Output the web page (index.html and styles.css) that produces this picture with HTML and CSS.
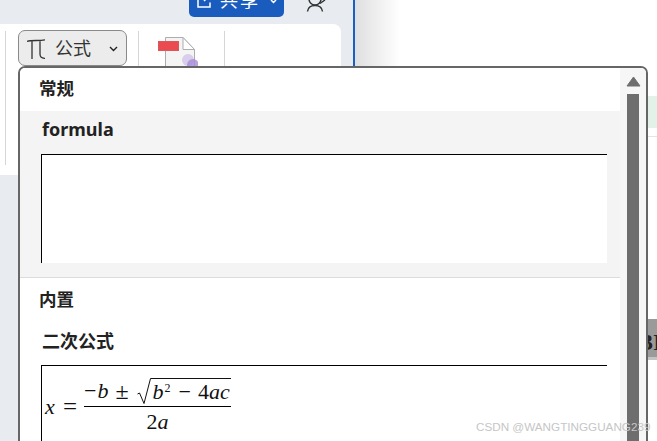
FILE: index.html
```html
<!DOCTYPE html>
<html lang="zh">
<head>
<meta charset="utf-8">
<title>公式</title>
<link rel="stylesheet" href="styles.css">
</head>
<body>
<div class="desk">
  <div class="app">
    <div class="titlebar">
      <div class="share">
        <svg class="share-ico" width="15" height="15" viewBox="0 0 15 15"><path d="M6 3H1V14H13V9.500M7 8L12.500 2.500M8.500 2H13.500V7" fill="none" stroke="#fff" stroke-width="1.500"/></svg>
        <span class="share-text">共享</span>
        <svg class="share-chev" width="7" height="5" viewBox="0 0 7 5"><path d="M1 1L3.500 3.500L6 1" fill="none" stroke="#fff" stroke-width="1.500"/></svg>
      </div>
      <svg class="user" width="24" height="14" viewBox="0 0 24 14"><circle cx="12" cy="-1" r="6" fill="none" stroke="#333" stroke-width="1.500"/><path d="M4.500 11.500C5 7.500 8 5.500 12 5.500C16 5.500 19 7.500 19.500 11.500M17 3.500L22 0" fill="none" stroke="#333" stroke-width="1.500"/></svg>
    </div>
    <div class="ribbon">
      <span class="sep"></span>
      <div class="formula-btn">
        <svg class="pi" width="18" height="20" viewBox="0 0 18 20"><path d="M0 2.500C2 1.500 5 1.500 9 1.500C12 1.500 15 1.500 18 0.800M5 2V20M13 2V15C13 18 14.500 19.500 18 19.300" fill="none" stroke="#333" stroke-width="1.300"/></svg>
        <span class="btn-text">公式</span>
        <svg class="chev" width="9" height="6" viewBox="0 0 9 6"><path d="M1 1L4.500 4.500L8 1" fill="none" stroke="#222" stroke-width="1.400"/></svg>
      </div>
      <span class="sep"></span>
      <svg class="doc" width="40" height="30" viewBox="0 0 40 30"><path d="M7.500 0.500H25L36.500 12.500V30H7.500Z" fill="#f4f4f4" stroke="#adadad"/><path d="M25 0.500V12.500H36.500Z" fill="#fff" stroke="#adadad"/><rect x="0.500" y="4.500" width="20" height="9" fill="#ea4a50" stroke="#d8585c"/><circle cx="30" cy="23" r="6" fill="#d5c9ea" opacity=".9"/><circle cx="35" cy="28" r="6" fill="#a98bd8" opacity=".8"/></svg>
      <span class="sep sep-last"></span>
    </div>
  </div>
  <div class="fade"></div>
  <div class="backdoc">
    <div class="green"></div>
    <div class="rule"></div>
    <div class="dark">3I</div>
  </div>
  <div class="popup">
    <div class="list">
      <div class="heading">常规</div>
      <div class="gallery-item hover">
        <div class="item-title">formula</div>
        <div class="preview empty"></div>
      </div>
      <div class="divider"></div>
      <div class="heading heading-2">内置</div>
      <div class="gallery-item">
        <div class="item-title title-cn">二次公式</div>
        <div class="preview">
          <div class="math">
            <i class="x">x</i><span class="eq">=</span>
            <span class="frac">
              <span class="num"><span class="minus">−</span><i>b</i><span class="pm">±</span><svg class="radical" width="15" height="27" viewBox="0 0 15 27"><path d="M0.500 16L2.500 15L7 25.500L13.500 0.500H15" fill="none" stroke="#111" stroke-width="1"/></svg><span class="root"><i>b</i><sup>2</sup><span class="minus2">−</span>4<i>ac</i></span></span>
              <span class="den">2<i>a</i></span>
            </span>
          </div>
        </div>
      </div>
    </div>
    <div class="scroll">
      <svg class="arrow" width="15" height="11" viewBox="0 0 15 11"><path d="M7.500 1L14 10H1Z" fill="#6e6e6e" stroke="#6e6e6e" stroke-linejoin="round"/></svg>
      <div class="thumb"></div>
    </div>
  </div>
  <div class="watermark">CSDN @WANGTINGGUANG239</div>
</div>
</body>
</html>
```
FILE: styles.css
```css
* { box-sizing: border-box; }
html, body { margin: 0; padding: 0; }
body { background: #fff; font-family: "Noto Sans CJK SC", "Noto Sans", sans-serif; color: #222; overflow: hidden; }
.desk { position: relative; width: 657px; height: 441px; overflow: hidden; background: #fff; }
.app { position: absolute; left: 0; top: 0; width: 355px; height: 441px; background: #e8ecf0; border-right: 2px solid #1b5fc4; display: flex; flex-direction: column; }
.titlebar { height: 24px; flex: none; display: flex; justify-content: flex-end; align-items: flex-start; padding-right: 26px; gap: 19px; }
.share { width: 95px; height: 17px; background: #1a5cbe; border-radius: 0 0 5px 5px; display: flex; align-items: flex-start; padding-left: 8px; color: #fff; overflow: hidden; flex: none; }
.share-ico { margin-top: -7px; flex: none; }
.share-text { font-size: 18px; line-height: 18px; height: 18px; margin: -10px 0 0 8px; letter-spacing: 2px; flex: none; }
.share-chev { margin: -1px 0 0 10px; flex: none; }
.user { flex: none; }
.ribbon { height: 151px; flex: none; background: #fff; border-radius: 0 8px 0 0; margin-right: 12px; display: flex; align-items: flex-start; padding: 7px 0 0 5px; }
.sep { width: 1px; height: 134px; background: #d6d6d6; flex: none; }
.sep-last { margin-left: 26px; }
.formula-btn { flex: none; width: 109px; height: 36px; margin: -1px 11px 0 12px; border: 1px solid #8a8a8a; border-radius: 7px; background: #ececec; display: flex; align-items: center; padding-left: 8px; }
.pi { flex: none; margin-top: 1px; }
.btn-text { font-size: 18px; line-height: 20px; margin: -2px 0 0 10px; color: #333; flex: none; }
.chev { margin: 1px 0 0 18px; flex: none; }
.doc { flex: none; margin: 6px 0 0 19px; }
.fade { position: absolute; left: 355px; top: 0; width: 45px; height: 441px; background: linear-gradient(to right, #dfdfdf, #fff); }
.backdoc { position: absolute; left: 620px; top: 0; width: 37px; height: 441px; }
.green { position: absolute; left: 28px; top: 96px; width: 9px; height: 32px; background: #e2f2e8; }
.rule { position: absolute; left: 0; top: 136px; width: 37px; height: 1px; background: #e4e4e4; }
.dark { position: absolute; left: 28px; top: 319px; width: 9px; height: 41px; background: #9a9a9a; border-bottom: 3px solid #c4c4c4; font: bold 24px/46px "Liberation Serif", serif; text-indent: -7px; color: #222; overflow: hidden; white-space: nowrap; }
.popup { position: absolute; left: 18px; top: 66px; width: 630px; height: 390px; background: #fff; border: 2px solid #666; border-radius: 7px 7px 0 0; display: flex; overflow: hidden; }
.list { width: 600px; flex: none; background: #fff; }
.heading { height: 43px; padding: 8px 0 0 19px; font-size: 17.500px; line-height: 24px; font-weight: 700; color: #222; }
.heading-2 { height: 41px; padding-top: 9px; }
.gallery-item { padding-left: 21px; }
.hover { background: #f4f4f4; height: 166px; padding-bottom: 14px; }
.item-title { padding: 6px 0 0 1px; height: 43px; font-size: 18px; line-height: 24px; font-weight: 700; font-family: "Noto Sans", sans-serif; color: #222; }
.title-cn { font-family: "Noto Sans CJK SC", sans-serif; padding-top: 9px; height: 46px; }
.preview { width: 566px; background: #fff; border-top: 1px solid #000; border-left: 1px solid #000; }
.preview.empty { height: 109px; }
.preview:not(.empty) { height: 90px; }
.divider { height: 1px; background: #dcdcdc; }
.math { display: flex; align-items: flex-start; padding-left: 3px; font-family: "Liberation Serif", serif; font-size: 22px; color: #111; }
.math .x { width: 18px; padding-top: 29px; line-height: 24px; }
.math .eq { width: 21px; padding-top: 29px; line-height: 24px; font-size: 25px; }
.frac { display: flex; flex-direction: column; align-items: center; width: 147px; }
.num { white-space: nowrap; height: 41px; display: flex; align-items: flex-start; border-bottom: 1px solid #000; width: 147px; line-height: 26px; }
.minus { margin-top: 12px; }
.num i { margin-top: 12px; }
.num > i { margin-left: 1px; }
.pm { margin: 12px 0 0 7px; font-size: 24px; }
.radical { flex: none; margin: 12px 0 0 8px; }
.root { display: flex; align-items: flex-start; border-top: 1px solid #111; margin-top: 12px; padding-left: 1px; height: 26px; line-height: 26px; width: 79px; }
.root i { margin-top: 0; }
.root sup { font-size: 12px; line-height: 18px; margin-left: 1px; }
.minus2 { margin: 0 7px 0 8px; }
.den { line-height: 28px; padding-top: 1px; }
.scroll { flex: 1; background: #f6f6f6; display: flex; flex-direction: column; align-items: center; padding-top: 8px; }
.arrow { flex: none; }
.thumb { width: 12px; margin-top: 7px; flex: 1; background: #6e6e6e; }
.watermark { position: absolute; left: 476px; top: 420px; font-family: "Liberation Sans", sans-serif; font-size: 11.700px; line-height: 14px; color: #c6c6c6; white-space: nowrap; }
```
